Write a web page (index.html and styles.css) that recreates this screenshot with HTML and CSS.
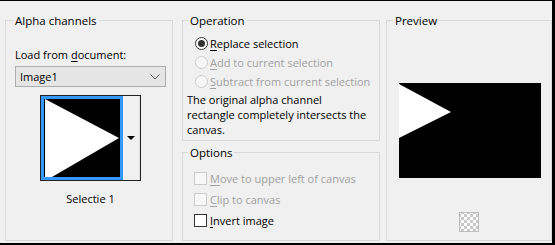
FILE: index.html
```html
<!DOCTYPE html>
<html lang="en">
<head>
  <meta charset="UTF-8" />
  <title>Load Selection From Alpha Channel</title>
  <link rel="stylesheet" href="styles.css">
</head>
<body>

  <div class="dialog">
    <!-- Alpha channels -->
    <fieldset class="group alpha">
      <legend>Alpha channels</legend>
      <div class="field-label">Load from <u>d</u>ocument:</div>
      <div class="combo">
        <span>Image1</span>
        <svg width="10" height="6" viewBox="0 0 10 6"><polyline points="0.5,0.5 5,5 9.5,0.5" fill="none" stroke="#555" stroke-width="1"/></svg>
      </div>
      <div class="thumb-wrap">
        <div class="thumb">
          <div class="thumb-img">
            <svg width="76" height="78" viewBox="0 0 76 78">
              <rect width="76" height="78" fill="#000"/>
              <polygon points="1,0 75,39 8,78 1,78" fill="#fff"/>
            </svg>
          </div>
          <div class="thumb-drop"><span class="caret"></span></div>
        </div>
        <div class="thumb-caption">Selectie 1</div>
      </div>
    </fieldset>

    <div class="middle">
      <!-- Operation -->
      <fieldset class="group operation">
        <legend>Operation</legend>
        <div class="choice"><span class="radio checked"></span><span><u>R</u>eplace selection</span></div>
        <div class="choice disabled"><span class="radio"></span><span><u>A</u>dd to current selection</span></div>
        <div class="choice disabled"><span class="radio"></span><span><u>S</u>ubtract from current selection</span></div>
        <p class="note">The original alpha channel<br>rectangle completely intersects the<br>canvas.</p>
      </fieldset>

      <!-- Options -->
      <fieldset class="group options">
        <legend>Options</legend>
        <div class="check disabled"><span class="box"></span><span><u>M</u>ove to upper left of canvas</span></div>
        <div class="check disabled"><span class="box"></span><span><u>C</u>lip to canvas</span></div>
        <div class="check"><span class="box"></span><span><u>I</u>nvert image</span></div>
      </fieldset>
    </div>

    <!-- Preview -->
    <fieldset class="group preview">
      <legend>Preview</legend>
      <div class="preview-img">
        <svg width="142" height="95" viewBox="0 0 142 95">
          <rect width="142" height="95" fill="#000"/>
          <polygon points="0,1 52,29 0,55" fill="#fff"/>
        </svg>
      </div>
      <div class="checker"></div>
    </fieldset>
  </div>

</body>
</html>
```

FILE: styles.css
```css
/* Base */
body {
  margin: 0;
  background: #fff;
  font-family: 'Open Sans', 'Noto Sans', sans-serif;
  font-size: 11px;
  color: #000;
}
u {
  text-decoration-thickness: 1px;
  text-underline-offset: 2px;
}
/* Dialog frame */
.dialog {
  box-sizing: border-box;
  width: 555px;
  height: 245px;
  padding: 12px 0 2px 5px;
  background: #f0f0f0;
  border-top: 1px solid #000;
  border-right: 3px solid #000;
  border-bottom: 2px solid #000;
  display: flex;
  white-space: nowrap;
}
/* Group boxes */
.group {
  margin: 0;
  padding: 0;
  min-width: 0;
  box-sizing: border-box;
  border: 1px solid #d9d9d9;
}
.group legend {
  padding: 0 2px;
  line-height: 15px;
  font-size: 11.5px;
}
.alpha {
  width: 168px;
  padding: 19px 6px 0 9px;
}
.alpha legend {
  margin-left: -2px;
}
.middle {
  width: 198px;
  margin-left: 9px;
  display: flex;
  flex-direction: column;
  gap: 4px;
}
.operation {
  height: 128px;
  padding: 6px 0 0 12px;
}
.operation legend {
  margin-left: -7px;
}
.options {
  flex: 1;
  padding: 8px 0 0 11px;
}
.options legend {
  margin-left: -6px;
}
.preview {
  width: 166px;
  margin-left: 6px;
  padding: 55px 0 0 12px;
}
.preview legend {
  margin-left: -6px;
}
/* Alpha channels content */
.field-label {
  line-height: 15px;
}
.combo {
  box-sizing: border-box;
  width: 151px;
  height: 21px;
  margin-top: 4px;
  padding: 0 5px 0 4px;
  background: #e5e5e5;
  border: 1px solid #adadad;
  display: flex;
  align-items: center;
  justify-content: space-between;
}
.thumb-wrap {
  width: 101px;
  margin: 8px 0 0 25px;
  text-align: center;
}
.thumb {
  display: flex;
  border: 1px solid #222;
  height: 84px;
}
.thumb-img {
  border: 3px solid #3399ff;
  width: 76px;
  height: 78px;
}
.thumb-img svg {
  display: block;
}
.thumb-drop {
  flex: 1;
  display: flex;
  align-items: center;
  justify-content: center;
  background: #f0f0f0;
  border-right: 1px solid #e0e0e0;
}
.caret {
  width: 0;
  height: 0;
  border-left: 4px solid transparent;
  border-right: 4px solid transparent;
  border-top: 4px solid #000;
}
.thumb-caption {
  margin-top: 10px;
  line-height: 15px;
}
/* Radios and checkboxes */
.choice, .check {
  display: flex;
  align-items: center;
  height: 19px;
}
.check {
  height: 21px;
  gap: 3px;
}
.choice {
  gap: 2px;
}
.disabled {
  color: #a0a0a0;
}
.radio {
  box-sizing: border-box;
  width: 13px;
  height: 13px;
  border-radius: 50%;
  border: 1px solid #333;
  background: #fff;
  display: flex;
  align-items: center;
  justify-content: center;
}
.radio.checked::after {
  content: '';
  width: 7px;
  height: 7px;
  border-radius: 50%;
  background: #333;
}
.disabled .radio {
  border-color: #cccccc;
  background: #f6f6f6;
}
.box {
  box-sizing: border-box;
  width: 13px;
  height: 13px;
  border: 1px solid #333;
  background: #fff;
}
.disabled .box {
  border-color: #cccccc;
  background: #f8f8f8;
}
.note {
  margin: 1px 0 0 -8px;
  line-height: 15px;
}
/* Preview */
.preview-img svg {
  display: block;
}
.checker {
  width: 20px;
  height: 20px;
  box-sizing: border-box;
  margin: 34px 0 0 60px;
  border: 1px solid #bdbdbd;
  background: repeating-conic-gradient(#c8c8c8 0 25%, #fff 0 50%) 1px 1px / 6px 6px;
}
```
